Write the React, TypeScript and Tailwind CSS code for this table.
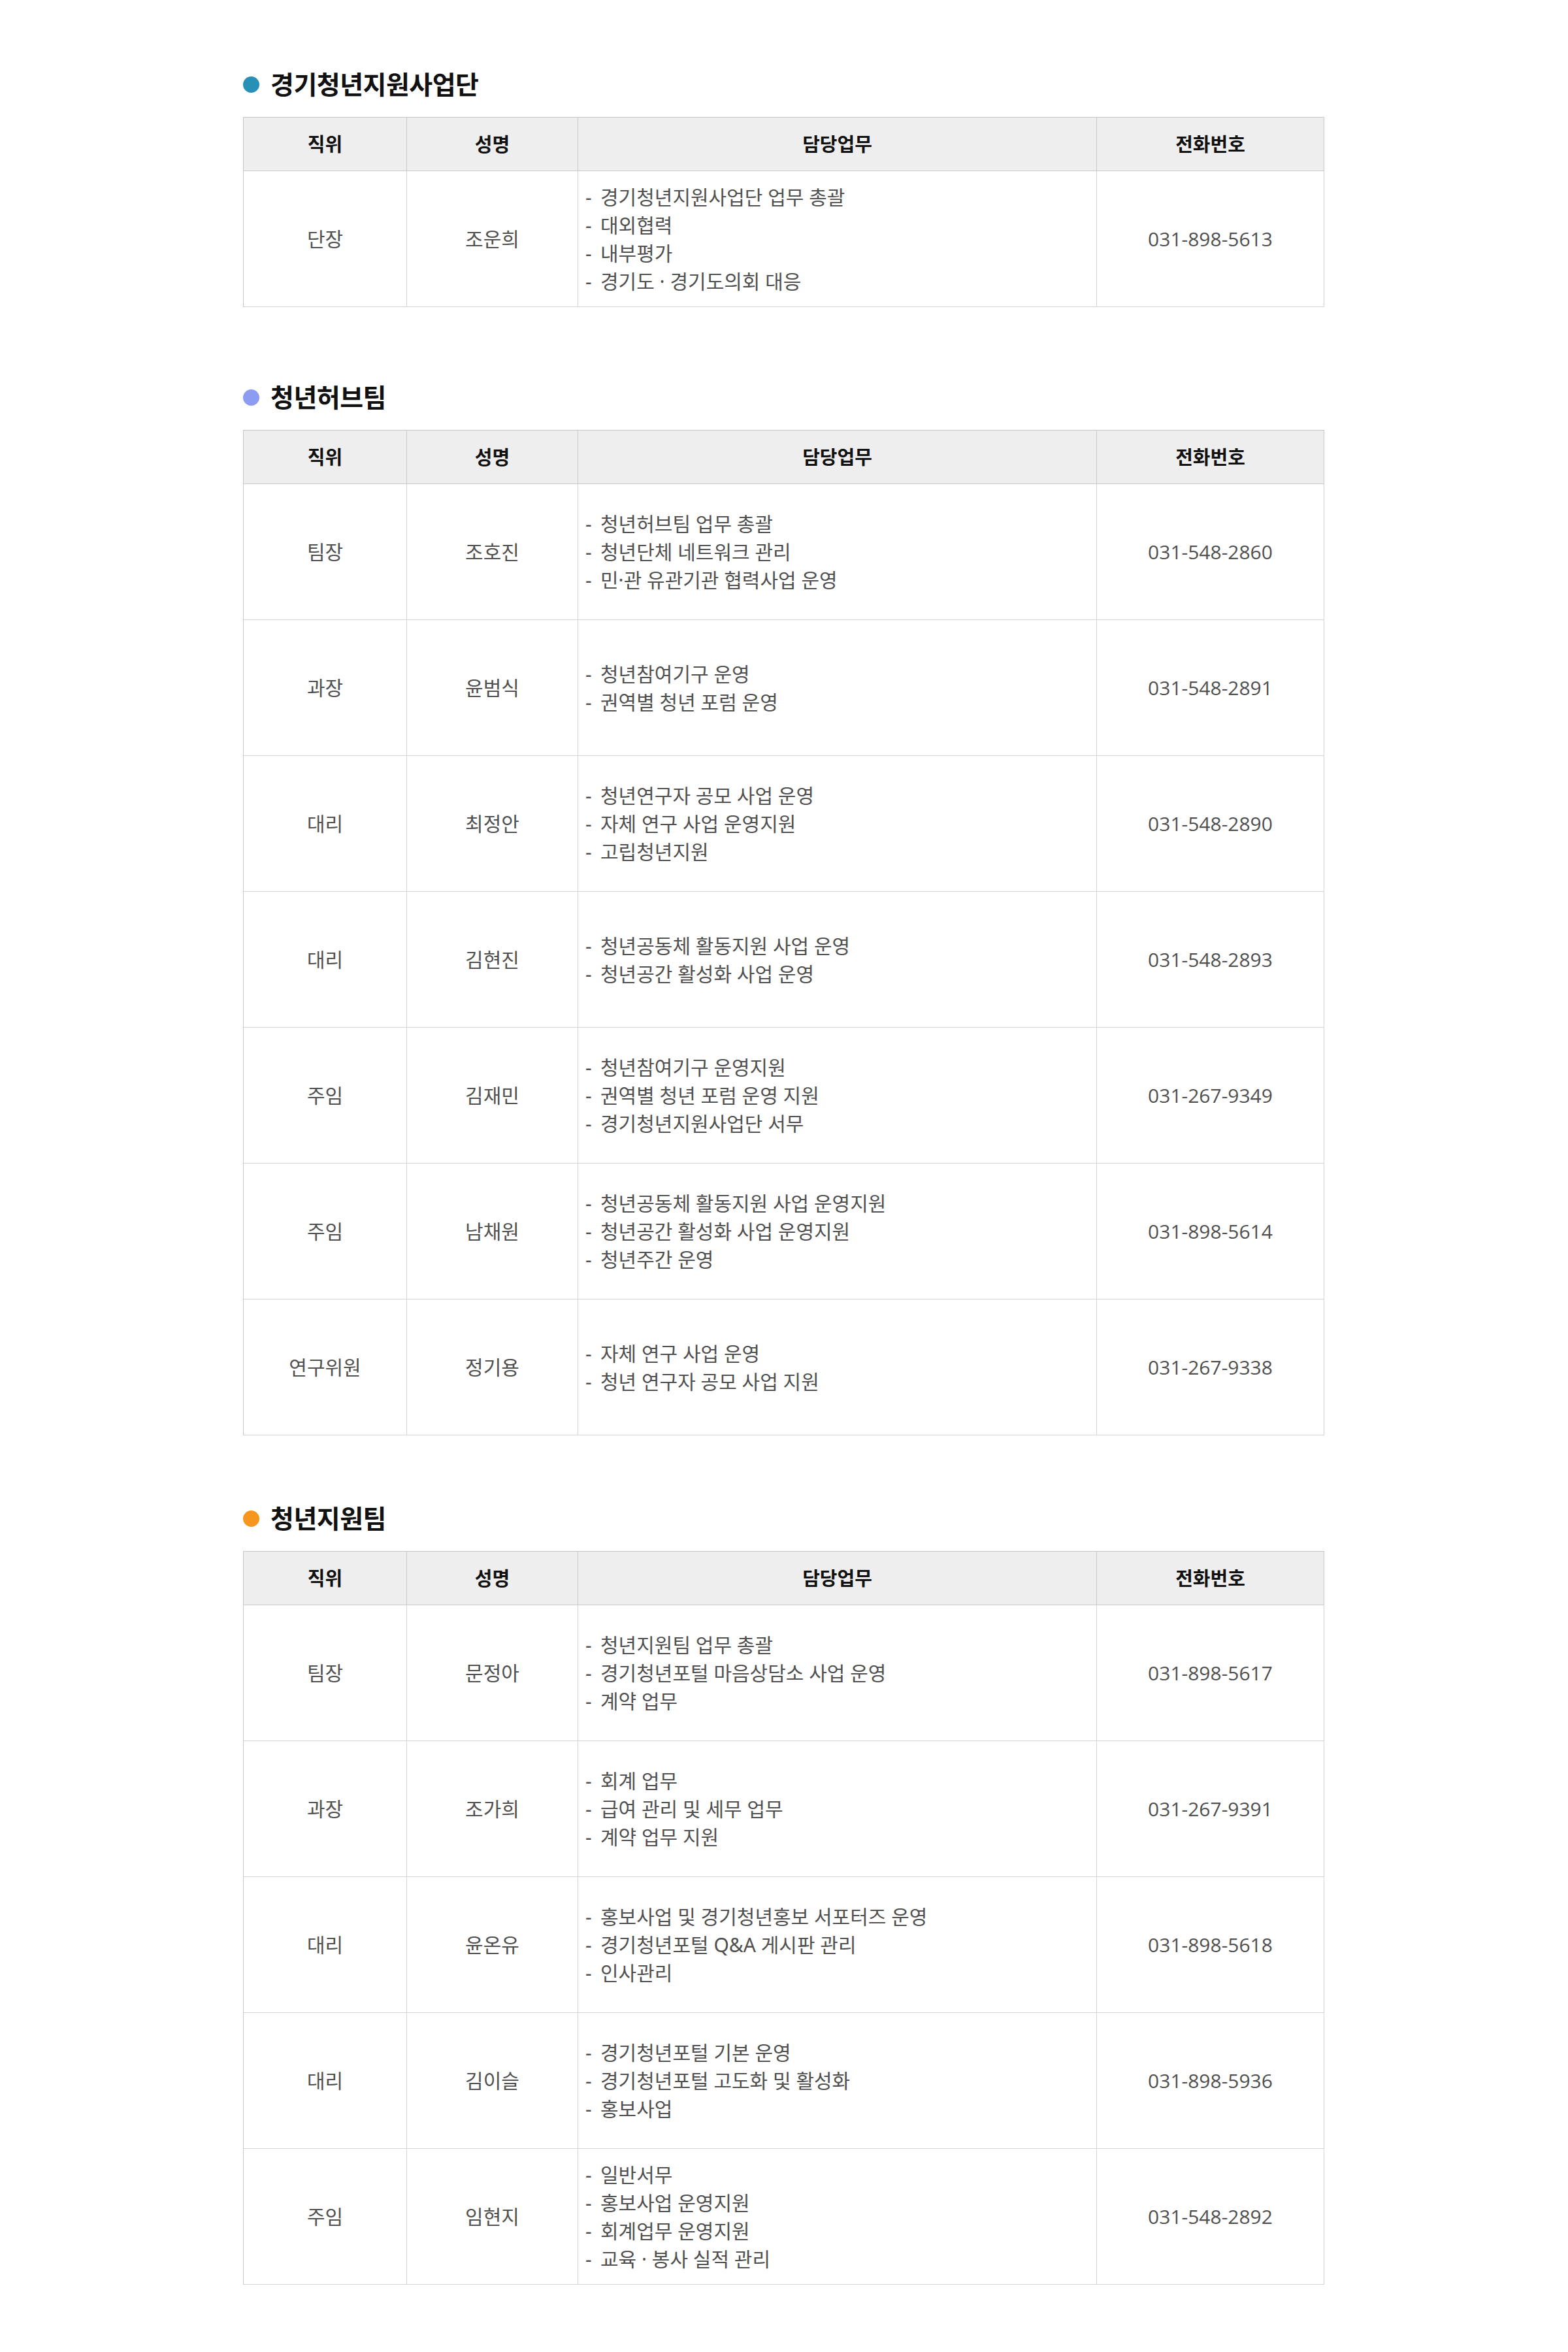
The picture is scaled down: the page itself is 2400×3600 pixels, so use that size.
import React from "react";

type Row = { pos: string; name: string; tasks: string[]; phone: string };
type Section = { title: string; dot: string; rows: Row[]; gapClass: string };

const sections: Section[] = [
  {
    title: "경기청년지원사업단",
    dot: "bg-[#2790b6]",
    gapClass: "pt-[104px]",
    rows: [
      {
        pos: "단장",
        name: "조운희",
        tasks: ["경기청년지원사업단 업무 총괄", "대외협력", "내부평가", "경기도 · 경기도의회 대응"],
        phone: "031-898-5613",
      },
    ],
  },
  {
    title: "청년허브팀",
    dot: "bg-[#8c9cf0]",
    gapClass: "pt-[113px]",
    rows: [
      { pos: "팀장", name: "조호진", tasks: ["청년허브팀 업무 총괄", "청년단체 네트워크 관리", "민·관 유관기관 협력사업 운영"], phone: "031-548-2860" },
      { pos: "과장", name: "윤범식", tasks: ["청년참여기구 운영", "권역별 청년 포럼 운영"], phone: "031-548-2891" },
      { pos: "대리", name: "최정안", tasks: ["청년연구자 공모 사업 운영", "자체 연구 사업 운영지원", "고립청년지원"], phone: "031-548-2890" },
      { pos: "대리", name: "김현진", tasks: ["청년공동체 활동지원 사업 운영", "청년공간 활성화 사업 운영"], phone: "031-548-2893" },
      { pos: "주임", name: "김재민", tasks: ["청년참여기구 운영지원", "권역별 청년 포럼 운영 지원", "경기청년지원사업단 서무"], phone: "031-267-9349" },
      { pos: "주임", name: "남채원", tasks: ["청년공동체 활동지원 사업 운영지원", "청년공간 활성화 사업 운영지원", "청년주간 운영"], phone: "031-898-5614" },
      { pos: "연구위원", name: "정기용", tasks: ["자체 연구 사업 운영", "청년 연구자 공모 사업 지원"], phone: "031-267-9338" },
    ],
  },
  {
    title: "청년지원팀",
    dot: "bg-[#f7961f]",
    gapClass: "pt-[102px]",
    rows: [
      { pos: "팀장", name: "문정아", tasks: ["청년지원팀 업무 총괄", "경기청년포털 마음상담소 사업 운영", "계약 업무"], phone: "031-898-5617" },
      { pos: "과장", name: "조가희", tasks: ["회계 업무", "급여 관리 및 세무 업무", "계약 업무 지원"], phone: "031-267-9391" },
      { pos: "대리", name: "윤온유", tasks: ["홍보사업 및 경기청년홍보 서포터즈 운영", "경기청년포털 Q&A 게시판 관리", "인사관리"], phone: "031-898-5618" },
      { pos: "대리", name: "김이슬", tasks: ["경기청년포털 기본 운영", "경기청년포털 고도화 및 활성화", "홍보사업"], phone: "031-898-5936" },
      { pos: "주임", name: "임현지", tasks: ["일반서무", "홍보사업 운영지원", "회계업무 운영지원", "교육 · 봉사 실적 관리"], phone: "031-548-2892" },
    ],
  },
];

const KR = "font-['Noto_Sans','Noto_Sans_CJK_KR',sans-serif]";

function Header() {
  const cell = "flex items-center justify-center border-r border-b border-[#cacaca] h-[82px] text-[29px] font-bold text-[#111111]";
  return (
    <div className="grid grid-cols-[250px_262px_794px_348px] bg-[#eeeeee]">
      <div className={cell}>직위</div>
      <div className={cell}>성명</div>
      <div className={cell}>담당업무</div>
      <div className={cell}>전화번호</div>
    </div>
  );
}

function DataRow({ row }: { row: Row }) {
  const cell = "flex items-center border-r border-b border-[#d4d4d4] h-[208px] text-[30px] text-[#505050]";
  return (
    <div className="grid grid-cols-[250px_262px_794px_348px]">
      <div className={`${cell} justify-center`}>{row.pos}</div>
      <div className={`${cell} justify-center`}>{row.name}</div>
      <div className={`${cell} pl-[11px]`}>
        <ul className="leading-[43px]">
          {row.tasks.map((t, i) => (
            <li key={i} className="flex whitespace-nowrap">
              <span className="w-[23px] shrink-0">-</span>
              <span>{t}</span>
            </li>
          ))}
        </ul>
      </div>
      <div className={`${cell} justify-center font-['Open_Sans','Noto_Sans',sans-serif] text-[28px]`}>{row.phone}</div>
    </div>
  );
}

export default function App() {
  return (
    <div className={`w-[2400px] min-h-[3600px] bg-white pl-[372px] ${KR}`}>
      {sections.map((s) => (
        <section key={s.title} className={s.gapClass}>
          <h2 className="flex items-center h-[50px] mb-[25px] gap-[17px]">
            <span className={`block w-[25px] h-[25px] rounded-full ${s.dot}`} />
            <span className="text-[39px] font-bold text-[#111111] tracking-[-0.5px]">{s.title}</span>
          </h2>
          <div className="w-[1655px] border-t border-l border-[#c6c6c6]">
            <Header />
            {s.rows.map((r, i) => (
              <DataRow key={i} row={r} />
            ))}
          </div>
        </section>
      ))}
    </div>
  );
}
